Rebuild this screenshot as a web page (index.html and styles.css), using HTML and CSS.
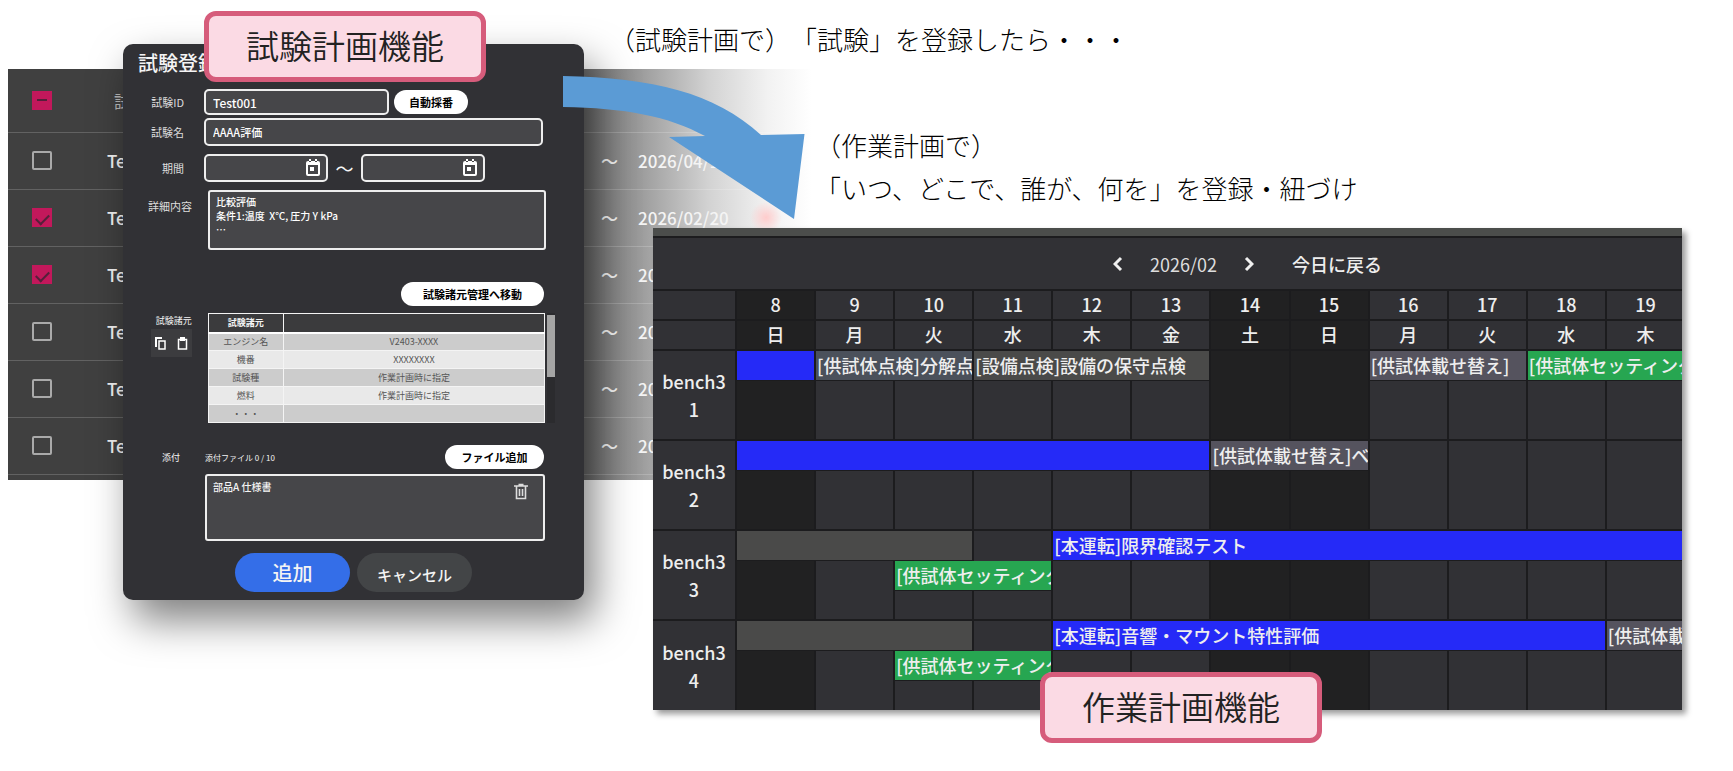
FILE: index.html
```
<!DOCTYPE html>
<html lang="ja">
<head>
    <meta charset="UTF-8">
    <meta name="viewport" content="width=device-width, initial-scale=1.0">
    <title>試験計画機能・作業計画機能</title>
    <link rel="stylesheet" href="styles.css">
</head>
<body>
    <div id="stage">
        <!-- test list behind the dialog -->
        <div id="listPane">
            <table class="test-list">
                <thead>
                    <tr>
                        <th class="col-check"><input type="checkbox" id="checkAll" aria-label="すべて選択"></th>
                        <th class="col-name">試験</th>
                        <th class="col-wave"></th>
                        <th class="col-date"></th>
                        <th></th>
                    </tr>
                </thead>
                <tbody id="testRows"></tbody>
            </table>
        </div>

        <!-- registration dialog -->
        <form id="dialog">
            <h2>試験登録</h2>
            <div class="row">
                <label for="testId">試験ID</label>
                <input type="text" id="testId" class="field field-id" value="Test001">
                <button type="button" class="pill pill-auto">自動採番</button>
            </div>
            <div class="row row-name">
                <label for="testName">試験名</label>
                <input type="text" id="testName" class="field" value="AAAA評価">
            </div>
            <div class="row row-period">
                <label for="dateFrom">期間</label>
                <div class="date">
                    <input type="text" id="dateFrom" class="field">
                    <svg viewBox="0 0 14 17"><path d="M0 4a2 2 0 0 1 2-2h10a2 2 0 0 1 2 2v11a2 2 0 0 1-2 2H2a2 2 0 0 1-2-2zM2 6v9h10V6zM3 0h2v3H3zM9 0h2v3H9zM4 8h4v4H4z" fill="#fff" fill-rule="evenodd"/></svg>
                </div>
                <span class="wave">～</span>
                <div class="date">
                    <input type="text" id="dateTo" class="field" aria-label="期間 終了">
                    <svg viewBox="0 0 14 17"><path d="M0 4a2 2 0 0 1 2-2h10a2 2 0 0 1 2 2v11a2 2 0 0 1-2 2H2a2 2 0 0 1-2-2zM2 6v9h10V6zM3 0h2v3H3zM9 0h2v3H9zM4 8h4v4H4z" fill="#fff" fill-rule="evenodd"/></svg>
                </div>
            </div>
            <div class="row row-detail">
                <label for="detail">詳細内容</label>
                <textarea id="detail" class="field">比較評価
条件1:温度  X℃, 圧力 Y kPa
…</textarea>
            </div>
            <div class="row-move">
                <button type="button" class="pill pill-move">試験諸元管理へ移動</button>
            </div>
            <div class="row row-spec">
                <div class="spec-side">
                    <span>試験諸元</span>
                    <div class="spec-tools">
                        <button type="button" aria-label="コピー"><svg viewBox="0 0 11 13"><path d="M1 10V1h6" fill="none" stroke="#fff" stroke-width="2"/><path d="M4 4h6v8H4z" fill="none" stroke="#fff" stroke-width="1.5"/></svg></button>
                        <button type="button" aria-label="貼り付け"><svg viewBox="0 0 11 13"><path d="M1.5 2.500h8v9.500h-8z" fill="none" stroke="#fff" stroke-width="1.500"/><path d="M3 0h5v4H3z" fill="#fff"/></svg></button>
                    </div>
                </div>
                <table class="spec">
                    <thead>
                        <tr><th>試験諸元</th><th></th></tr>
                    </thead>
                    <tbody>
                        <tr><td>エンジン名</td><td>V2403-XXXX</td></tr>
                        <tr><td>機番</td><td>XXXXXXXX</td></tr>
                        <tr><td>試験種</td><td>作業計画時に指定</td></tr>
                        <tr><td>燃料</td><td>作業計画時に指定</td></tr>
                        <tr><td>・・・</td><td></td></tr>
                    </tbody>
                </table>
                <div class="scroll"><div class="thumb"></div></div>
            </div>
            <div class="row row-attach">
                <span class="attach-label">添付</span>
                <span class="attach-count">添付ファイル 0 / 10</span>
                <button type="button" class="pill pill-file">ファイル追加</button>
            </div>
            <div class="files">
                <span>部品A 仕様書</span>
                <button type="button" aria-label="削除"><svg viewBox="0 0 14 17"><path d="M0 3h14M4.500 1.500h5M2.500 3v12.500h9V3M5.500 6v7M8.500 6v7" fill="none" stroke="#ddd" stroke-width="1.600"/></svg></button>
            </div>
            <div class="actions">
                <button type="submit" class="add">追加</button>
                <button type="button" class="cancel">キャンセル</button>
            </div>
        </form>
        <div class="badge badge-test">試験計画機能</div>

        <p class="caption caption-test">（試験計画で）「試験」を登録したら・・・</p>
        <p class="caption caption-work">（作業計画で）<br>「いつ、どこで、誰が、何を」を登録・紐づけ</p>

        <svg class="arrow" viewBox="0 0 242 144"><path d="M0 0C90 2 151 16 198 59L241.500 58L231 143L106 61L142 60C105 40 62 32 0 31Z" fill="#5b9bd5"/></svg>

        <!-- work schedule -->
        <div id="schedule">
            <div class="strip"></div>
            <div class="nav">
                <button type="button" aria-label="前の月"><svg viewBox="0 0 10 16"><path d="M8 2L2 8l6 6" fill="none" stroke="#f0f0f0" stroke-width="3"/></svg></button>
                <span class="month">2026/02</span>
                <button type="button" aria-label="次の月"><svg viewBox="0 0 10 16"><path d="M2 2l6 6l-6 6" fill="none" stroke="#f0f0f0" stroke-width="3"/></svg></button>
                <button type="button" class="today">今日に戻る</button>
            </div>
            <table class="gantt">
                <thead id="ganttHead"></thead>
                <tbody id="ganttBody"></tbody>
            </table>
        </div>
        <div class="badge badge-work">作業計画機能</div>
    </div>

    <script>
        // Test list
        const tests = [
            { name: 'Test001', end: '2026/04/10', checked: false },
            { name: 'Test002', end: '2026/02/20', checked: true, mark: true },
            { name: 'Test003', end: '2026/02/27', checked: true },
            { name: 'Test004', end: '2026/03/06', checked: false },
            { name: 'Test005', end: '2026/03/13', checked: false },
            { name: 'Test006', end: '2026/03/20', checked: false }
        ];
        document.getElementById('checkAll').indeterminate = true;
        document.getElementById('testRows').innerHTML = tests.map(t => `
            <tr>
                <td class="col-check"><input type="checkbox" aria-label="${t.name}" ${t.checked ? 'checked' : ''}></td>
                <td>${t.name}</td>
                <td>～</td>
                <td>${t.end}</td>
                <td class="${t.mark ? 'mark' : ''}"></td>
            </tr>`).join('');

        // Schedule: each bench has lanes, each lane is a list of [days, type, text]
        const firstDay = 8;
        const dayCount = 12;
        const weekdays = ['日', '月', '火', '水', '木', '金', '土'];
        const benches = [
            { name: 'bench3<br>1', lanes: [
                [[1, 'run', ''], [2, 'check', '[供試体点検]分解点検'], [3, 'idle', '[設備点検]設備の保守点検'], [2], [2, 'swap', '[供試体載せ替え]'], [2, 'setup', '[供試体セッティング]']],
                [[12]], [[12]]
            ] },
            { name: 'bench3<br>2', lanes: [
                [[6, 'run', ''], [2, 'swap', '[供試体載せ替え]ベンチ'], [4]],
                [[12]], [[12]]
            ] },
            { name: 'bench3<br>3', lanes: [
                [[3, 'idle', ''], [1], [8, 'run', '[本運転]限界確認テスト']],
                [[2], [2, 'setup', '[供試体セッティング]'], [8]],
                [[12]]
            ] },
            { name: 'bench3<br>4', lanes: [
                [[3, 'idle', ''], [1], [7, 'run', '[本運転]音響・マウント特性評価'], [1, 'swap', '[供試体載せ替え]']],
                [[2], [2, 'setup', '[供試体セッティング]'], [8]],
                [[12]]
            ] }
        ];

        function dayClass(i) {
            return i % 7 === 0 || i % 7 === 6 ? 'off' : '';
        }

        function headRow(text) {
            let html = '<tr><th class="bench"></th>';
            for (let i = 0; i < dayCount; i++) {
                html += `<th class="${dayClass(i)}">${text(i)}</th>`;
            }
            return html + '</tr>';
        }

        function laneCells(lane) {
            let day = 0;
            let html = '';
            lane.forEach(([days, type, text]) => {
                if (type) {
                    html += `<td class="event ${type}" colspan="${days}">${text}</td>`;
                } else {
                    for (let i = 0; i < days; i++) {
                        html += `<td class="${dayClass(day + i)}"></td>`;
                    }
                }
                day += days;
            });
            return html;
        }

        document.getElementById('ganttHead').innerHTML =
            headRow(i => firstDay + i) + headRow(i => weekdays[i % 7]);
        document.getElementById('ganttBody').innerHTML = benches.map(b =>
            b.lanes.map((lane, i) => `
                <tr class="lane${i + 1}">
                    ${i === 0 ? `<th class="bench" rowspan="3">${b.name}</th>` : ''}${laneCells(lane)}
                </tr>`).join('')).join('');
    </script>
</body>
</html>
```

FILE: styles.css
```
* {
    box-sizing: border-box;
}
body {
    margin: 0;
    background-color: #fff;
    font-family: "Noto Sans CJK JP", sans-serif;
    text-spacing-trim: space-all;
}
button {
    padding: 0;
    border: none;
    background: none;
    color: inherit;
    font-family: inherit;
    cursor: pointer;
}
svg {
    display: block;
}
#stage {
    position: relative;
    min-height: 771px;
    overflow: hidden;
}

/* test list */
#listPane {
    position: absolute;
    left: 8px;
    top: 69px;
    width: 804px;
    padding-bottom: 5px;
    background: linear-gradient(to right, #404040 0, #404040 500px, #6c6c6c 576px, #a2a2a2 640px, #d2d2d2 700px, #f2f2f2 760px, #fff 100%);
    color: #f4f4f4;
}
.test-list {
    width: 100%;
    table-layout: fixed;
    border-collapse: collapse;
    font-size: 17px;
    font-weight: 500;
    text-align: left;
}
.test-list th,
.test-list td {
    height: 57px;
    padding: 0;
    border-bottom: 1px solid rgba(255, 255, 255, 0.18);
}
.test-list th {
    height: 63px;
    padding-left: 7px;
    font-weight: 400;
    color: #bbb;
}
.test-list .col-check {
    width: 99px;
    padding-left: 24px;
}
.test-list .col-name {
    width: 494px;
}
.test-list .col-wave {
    width: 37px;
}
.test-list .col-date {
    width: 104px;
}
.test-list input {
    display: block;
    appearance: none;
    width: 20px;
    height: 19px;
    margin: 0;
    border: 2px solid #aaa;
    border-radius: 2px;
}
.test-list input:checked,
.test-list input:indeterminate {
    display: grid;
    place-items: center;
    border: none;
    border-radius: 0;
    background-color: #c2185b;
}
.test-list input:checked::before {
    content: "";
    width: 11px;
    height: 6px;
    border-left: 2px solid #55203a;
    border-bottom: 2px solid #55203a;
    rotate: -45deg;
}
.test-list input:indeterminate::before {
    content: "";
    width: 10px;
    height: 2px;
    background-color: #55203a;
}
.mark {
    background: radial-gradient(circle at 24px 50%, #fcc 0, rgba(255, 204, 204, 0) 16px);
}

/* registration dialog */
#dialog {
    position: absolute;
    left: 123px;
    top: 44px;
    width: 461px;
    padding-bottom: 8px;
    border-radius: 10px;
    background-color: #313135;
    box-shadow: 10px 20px 40px rgba(0, 0, 0, 0.5);
    color: #f4f4f4;
    font-size: 11px;
}
#dialog h2 {
    height: 45px;
    margin: 0;
    padding-left: 15px;
    font-size: 20px;
    line-height: 38px;
    font-weight: 500;
}
.row {
    display: flex;
    align-items: center;
    padding-right: 41px;
}
.row label {
    width: 61px;
    margin-right: 20px;
    text-align: right;
    color: #ddd;
}
.field {
    flex: 1;
    min-width: 0;
    height: 28px;
    padding: 0 7px;
    border: 2px solid #eee;
    border-radius: 5px;
    background-color: #464649;
    color: #fff;
    font-family: inherit;
    font-size: 11px;
    font-weight: 500;
}
.field-id {
    flex: none;
    width: 185px;
    height: 26px;
    font-size: 12px;
}
.pill {
    height: 24px;
    border-radius: 12px;
    background-color: #fff;
    color: #000;
    font-size: 11px;
    font-weight: 700;
    line-height: 22px;
}
.pill-auto {
    width: 74px;
    margin-left: 5px;
}
.row-name {
    margin-top: 3px;
}
.row-period {
    margin-top: 8px;
}
.date {
    position: relative;
    display: flex;
    width: 124px;
}
.date svg {
    position: absolute;
    right: 8px;
    top: 5px;
    width: 14px;
    height: 17px;
}
.wave {
    width: 33px;
    text-align: center;
    font-size: 18px;
    line-height: 27px;
}
.row-detail {
    align-items: flex-start;
    margin-top: 8px;
    padding-right: 38px;
}
.row-detail label {
    width: 69px;
    margin-right: 16px;
    line-height: 32px;
}
.row-detail .field {
    height: 60px;
    padding: 3px 6px;
    border-radius: 3px;
    font-size: 10px;
    line-height: 14px;
    white-space: pre;
    resize: none;
    overflow: hidden;
}
.row-move {
    display: flex;
    justify-content: flex-end;
    margin-top: 32px;
    padding-right: 40px;
}
.pill-move {
    width: 143px;
}
.row-spec {
    align-items: stretch;
    margin-top: 7px;
    padding-right: 29px;
    font-size: 9px;
}
.spec-side {
    width: 69px;
    margin-right: 16px;
    line-height: 16px;
    text-align: right;
}
.spec-tools {
    display: flex;
    align-items: center;
    justify-content: space-between;
    width: 41px;
    height: 28px;
    margin-left: auto;
    padding: 0 4px;
    background-color: #3c3c3f;
}
.spec-tools svg {
    width: 11px;
    height: 13px;
}
.spec {
    width: 338px;
    table-layout: fixed;
    border-collapse: collapse;
    border: 1px solid #fff;
    font-size: 9px;
    line-height: 16px;
    text-align: center;
}
.spec th,
.spec td {
    height: 18px;
    padding: 0;
    border: 1px solid #f4f4f4;
}
.spec th {
    height: 19px;
    background-color: #3b3b3d;
    border-bottom: 2px solid #fff;
    font-weight: 700;
}
.spec th:first-child {
    width: 75px;
}
.spec td {
    color: #555;
    background-color: #ccc;
}
.spec tr:nth-child(even) td {
    background-color: #e9e9e9;
}
.scroll {
    width: 8px;
    margin-left: 2px;
    padding-top: 2px;
    background-color: #2b2b2e;
}
.thumb {
    height: 62px;
    background-color: #a5a5a5;
}
.row-attach {
    margin-top: 22px;
    padding-right: 40px;
    font-size: 9px;
}
.attach-label {
    width: 57px;
    margin-right: 25px;
    text-align: right;
}
.attach-count {
    font-size: 8px;
}
.pill-file {
    width: 99px;
    margin-left: auto;
}
.files {
    display: flex;
    justify-content: space-between;
    align-items: flex-start;
    height: 67px;
    margin: 5px 39px 0 82px;
    padding: 3px 15px 0 6px;
    border: 2px solid #eee;
    border-radius: 3px;
    background-color: #464649;
    font-size: 10px;
    font-weight: 500;
}
.files svg {
    width: 14px;
    height: 17px;
    margin-top: 4px;
}
.actions {
    display: flex;
    justify-content: center;
    gap: 7px;
    margin-top: 12px;
}
.actions button {
    width: 115px;
    height: 39px;
    border-radius: 20px;
    font-size: 20px;
    font-weight: 500;
}
.actions .add {
    background-color: #346ee8;
}
.actions .cancel {
    padding-top: 4px;
    background-color: #434547;
    font-size: 15px;
}

/* callouts */
.badge {
    position: absolute;
    width: 282px;
    height: 71px;
    border: 5px solid #d65c7b;
    border-radius: 12px;
    background-color: #fbdae4;
    color: #222;
    font-size: 33px;
    font-weight: 350;
    line-height: 58px;
    text-align: center;
}
.badge-test {
    left: 204px;
    top: 11px;
}
.badge-work {
    left: 1040px;
    top: 672px;
}
.caption {
    position: absolute;
    margin: 0;
    color: #000;
    font-size: 26px;
    font-weight: 300;
    line-height: 43px;
    white-space: nowrap;
}
.caption-test {
    left: 609px;
    top: 17px;
}
.caption-work {
    left: 815px;
    top: 123px;
}
.arrow {
    position: absolute;
    left: 563px;
    top: 76px;
    width: 242px;
    height: 144px;
}

/* work schedule */
#schedule {
    position: absolute;
    left: 653px;
    right: 51px;
    top: 228px;
    height: 482px;
    overflow: hidden;
    background-color: #313135;
    box-shadow: 4px 4px 6px rgba(0, 0, 0, 0.4);
    color: #eee;
    font-size: 18px;
}
.strip {
    height: 10px;
    border-bottom: 2px solid #1c1c1e;
    background-color: #4b4d4b;
}
.nav {
    display: flex;
    align-items: center;
    justify-content: center;
    height: 51px;
    padding-left: 160px;
}
.nav svg {
    width: 10px;
    height: 16px;
}
.month {
    margin: 0 27px;
    color: #ddd;
}
.today {
    margin-left: 38px;
    font-size: 18px;
    font-weight: 500;
}
.gantt {
    width: calc(100% + 4px);
    table-layout: fixed;
    border-collapse: collapse;
    font-weight: 500;
}
.gantt th,
.gantt td {
    height: 30px;
    padding: 0;
    border-left: 2px solid #1c1c1e;
    border-right: 2px solid #1c1c1e;
    font-weight: 500;
    line-height: 28px;
    overflow: hidden;
    white-space: nowrap;
}
.gantt thead th {
    padding-bottom: 1px;
    line-height: 27px;
}
.gantt thead th,
.gantt .bench,
.gantt .lane1 td {
    border-top: 2px solid #1c1c1e;
}
.gantt .bench {
    width: 83px;
    border-left: none;
}
.gantt .off {
    background-color: #212122;
}
.gantt .event {
    padding-left: 1px;
    border-bottom: 1px solid #1c1c1e;
    text-align: left;
}
.run {
    background-color: #252af7;
}
.check {
    background-color: #4b515b;
}
.idle {
    background-color: #4a4a49;
}
.swap {
    background-color: #55535e;
}
.setup {
    background-color: #27a651;
}
```
